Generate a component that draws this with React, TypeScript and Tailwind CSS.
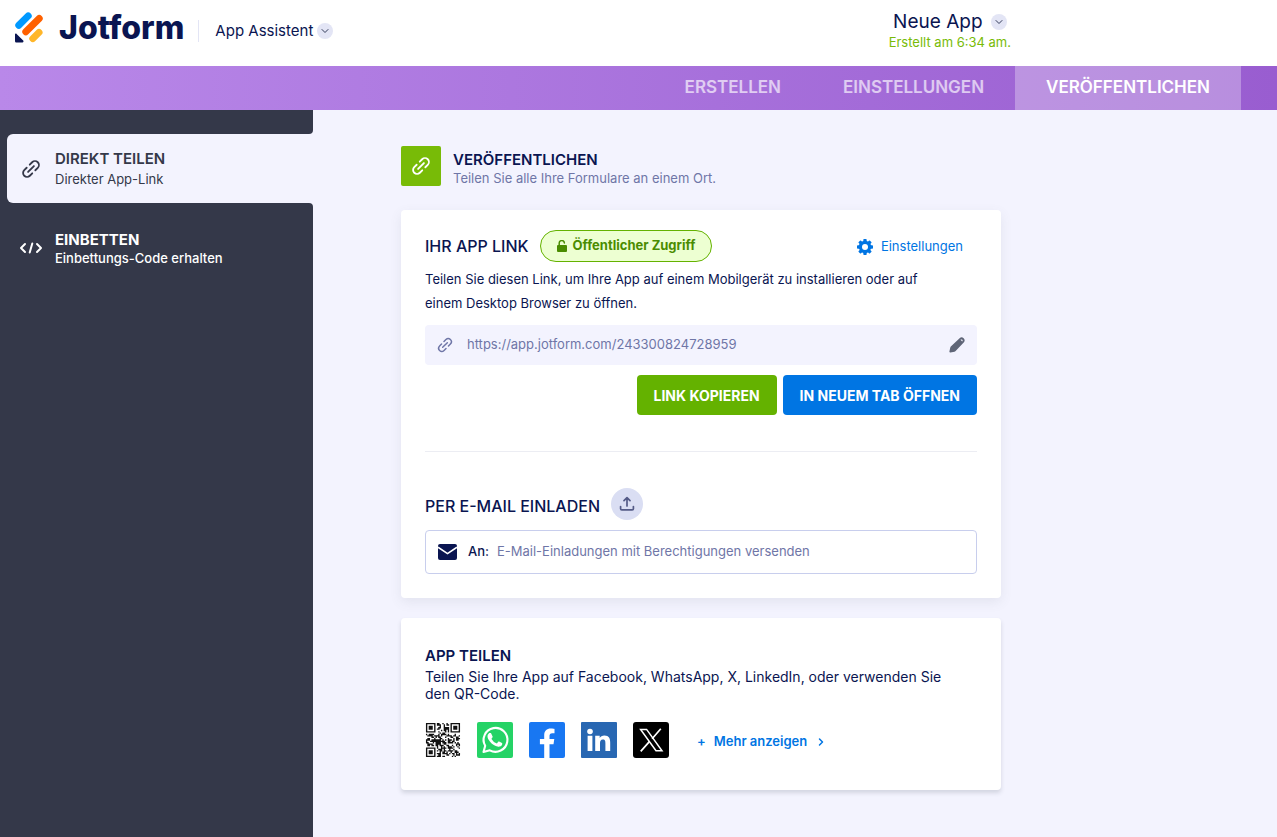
import { useState } from "react";
import { ChevronDown, ChevronRight } from "lucide-react";

interface IconProps {
  className?: string;
}

interface NavTab {
  id: string;
  label: string;
}

const tabs: NavTab[] = [
  { id: "build", label: "ERSTELLEN" },
  { id: "settings", label: "EINSTELLUNGEN" },
  { id: "publish", label: "VERÖFFENTLICHEN" },
];

const LinkIcon = ({ className = "" }: IconProps) => (
  <svg viewBox="0 0 24 24" fill="none" stroke="currentColor" strokeWidth="2.2" strokeLinecap="round" className={className}>
    <path d="M8.5 15.5l7-7" />
    <path d="M10.5 6.8l2.9-2.9a4.7 4.7 0 0 1 6.7 6.7l-2.9 2.9" />
    <path d="M13.5 17.2l-2.9 2.9a4.7 4.7 0 0 1-6.7-6.7l2.9-2.9" />
  </svg>
);

const CodeIcon = ({ className = "" }: IconProps) => (
  <svg viewBox="0 0 24 14" fill="none" stroke="currentColor" strokeWidth="2" strokeLinecap="round" strokeLinejoin="round" className={className}>
    <path d="M6 3L2 7l4 4M18 3l4 4-4 4M13.3 2.5l-2.6 9" />
  </svg>
);

const LockIcon = ({ className = "" }: IconProps) => (
  <svg viewBox="0 0 10 12" className={className}>
    <rect x="0" y="5" width="10" height="7" rx="1" fill="currentColor" />
    <path d="M2.2 5.5V3.4a2.6 2.6 0 0 1 5.2-.4" fill="none" stroke="currentColor" strokeWidth="1.5" strokeLinecap="round" />
  </svg>
);

const GearIcon = ({ className = "" }: IconProps) => (
  <svg viewBox="0 0 16 16" className={className}>
    <g fill="currentColor">
      <rect x="6.3" y="0" width="3.4" height="16" rx="0.8" />
      <rect x="6.3" y="0" width="3.4" height="16" rx="0.8" transform="rotate(45 8 8)" />
      <rect x="6.3" y="0" width="3.4" height="16" rx="0.8" transform="rotate(90 8 8)" />
      <rect x="6.3" y="0" width="3.4" height="16" rx="0.8" transform="rotate(135 8 8)" />
      <circle cx="8" cy="8" r="6.2" />
    </g>
    <circle cx="8" cy="8" r="3" fill="#fff" />
  </svg>
);

const PencilIcon = ({ className = "" }: IconProps) => (
  <svg viewBox="0 0 16 16" className={className}>
    <path
      fill="currentColor"
      fillRule="evenodd"
      d="M.4 14.6l.9-4.1c.1-.4.3-.7.5-.9l8.800-8.300a2.900 2.900 0 0 1 4.100 4.100l-8.300 8.800c-.3.3-.6.4-.9.5l-4.100.9c-.6.1-1.100-.4-1-1zM11.500 2.800l1.700 1.700c.6-.6.6-1.200.1-1.700s-1.200-.5-1.800 0z"
    />
  </svg>
);

const UploadIcon = ({ className = "" }: IconProps) => (
  <svg viewBox="0 0 16 16" fill="none" stroke="currentColor" strokeWidth="1.7" strokeLinecap="round" strokeLinejoin="round" className={className}>
    <path d="M8 10V2M5 4.6L8 1.6l3 3M1.6 10.5v2.2c0 .7.5 1.2 1.2 1.2h10.4c.7 0 1.2-.5 1.2-1.2v-2.2" />
  </svg>
);

const MailIcon = ({ className = "" }: IconProps) => (
  <svg viewBox="0 0 19 16" className={className}>
    <rect width="19" height="16" rx="2" fill="currentColor" />
    <path d="M0 3.2l9.5 6.4L19 3.2" fill="none" stroke="#fff" strokeWidth="1.7" />
  </svg>
);

const LogoMark = ({ className = "" }: IconProps) => (
  <svg viewBox="0 0 28 31" strokeLinecap="round" strokeWidth="7" className={className}>
    <path d="M3.8 13.3l9.4-9.4" stroke="#0099ff" />
    <path d="M10.8 19.8L24.2 6.5" stroke="#ff6100" />
    <path d="M17.8 26.6l6.2-6.2" stroke="#ffb629" />
    <path d="M0 22.6c0-.9 1-1.3 1.6-.7l6.6 6.7c.7.7.2 1.9-.7 1.9H1.6C.7 30.5 0 29.8 0 28.9z" fill="#0a1551" />
  </svg>
);

const QR_SIZE = 25;
const FINDERS = [
  [0, 0],
  [QR_SIZE - 7, 0],
  [0, QR_SIZE - 7],
];

function isDark(x: number, y: number) {
  for (const [fx, fy] of FINDERS) {
    const dx = x - fx;
    const dy = y - fy;
    if (dx >= -1 && dx <= 7 && dy >= -1 && dy <= 7) {
      const ring = Math.max(Math.abs(dx - 3), Math.abs(dy - 3));
      return ring !== 2 && ring !== 4;
    }
  }
  const noise = Math.sin(x * 12.9898 + y * 78.233) * 43758.5453;
  return noise - Math.floor(noise) < 0.54;
}

const QrIcon = ({ className = "" }: IconProps) => {
  let d = "";
  for (let y = 0; y < QR_SIZE; y++) {
    for (let x = 0; x < QR_SIZE; x++) {
      if (isDark(x, y)) d += `M${x} ${y}h1v1h-1z`;
    }
  }
  return (
    <svg viewBox="-0.7 -0.7 26.4 26.4" className={className}>
      <path d={d} fill="#111" />
    </svg>
  );
};

const WhatsAppIcon = ({ className = "" }: IconProps) => (
  <svg viewBox="0 0 36 36" className={className}>
    <rect width="36" height="36" rx="2" fill="#25d366" />
    <path
      d="M6.5 30l1.7-6.2A11.9 11.9 0 1 1 12.8 28.3z"
      fill="none"
      stroke="#fff"
      strokeWidth="2.1"
      strokeLinejoin="round"
    />
    <path
      fill="#fff"
      d="M14.3 11.7c-.3-.6-.5-.6-.8-.6h-.7c-.3 0-.7.1-1 .5-.4.4-1.3 1.3-1.3 3s1.3 3.5 1.5 3.7c.2.3 2.5 4 6.2 5.4 3.1 1.2 3.7 1 4.4.9.7-.1 2.1-.9 2.4-1.7.3-.8.3-1.6.2-1.7-.1-.2-.3-.3-.7-.4l-2.4-1.2c-.4-.1-.6-.2-.9.2l-1.1 1.4c-.2.3-.4.3-.8.1a9.5 9.5 0 0 1-4.8-4.2c-.2-.4 0-.6.2-.7l.5-.6.4-.6c.1-.3 0-.5 0-.6z"
    />
  </svg>
);

const FacebookIcon = ({ className = "" }: IconProps) => (
  <svg viewBox="0 0 36 36" className={className}>
    <rect width="36" height="36" rx="2" fill="#1877f2" />
    <path
      fill="#fff"
      d="M15.2 36V22.3h-4.3v-5.2h4.3v-3.8c0-4.4 2.6-6.7 6.5-6.7 1.9 0 3.8.3 3.8.3v4.3h-2.2c-2.1 0-2.8 1.3-2.8 2.7v3.2h4.8l-.8 5.2h-4V36z"
    />
  </svg>
);

const LinkedInIcon = ({ className = "" }: IconProps) => (
  <svg viewBox="0 0 36 36" className={className}>
    <rect width="36" height="36" rx="1" fill="#2867b2" />
    <circle cx="9" cy="9.5" r="2.8" fill="#fff" />
    <path
      fill="#fff"
      d="M6.6 13.8h4.8V29H6.6zM14.2 13.8h4.5v2.1c.8-1.4 2.4-2.5 4.7-2.5 4.7 0 5.8 3 5.8 7.1V29h-4.8v-7.6c0-1.8-.1-3.9-2.5-3.9s-2.9 1.8-2.9 3.8V29h-4.8z"
    />
  </svg>
);

const XIcon = ({ className = "" }: IconProps) => (
  <svg viewBox="0 0 36 36" className={className}>
    <rect width="36" height="36" rx="3" fill="#000" />
    <path d="M7.6 7.4h6L29 28.8h-6z" fill="none" stroke="#fff" strokeWidth="1.5" />
    <path d="M27.8 6.8l-8.7 9.9M16.6 19.4l-8.9 10" stroke="#fff" strokeWidth="1.7" />
  </svg>
);

const shareTargets = [
  { name: "QR-Code", Icon: QrIcon },
  { name: "WhatsApp", Icon: WhatsAppIcon },
  { name: "Facebook", Icon: FacebookIcon },
  { name: "LinkedIn", Icon: LinkedInIcon },
  { name: "X", Icon: XIcon },
];

const Caret = () => (
  <span className="flex size-4 items-center justify-center rounded-full bg-[#e3e5f5]">
    <ChevronDown size={12} strokeWidth={2} className="text-[#343c5a]" />
  </span>
);

function Header() {
  return (
    <header className="flex h-[66px] items-start bg-white pl-[15px]">
      <a href="#" aria-label="Jotform" className="flex pt-3">
        <LogoMark className="h-[31px] w-7" />
        <span className="ml-4 text-[32px] leading-8 font-extrabold">Jotform</span>
      </a>
      <button type="button" className="mt-5 ml-[14px] flex h-[22px] items-center gap-1 border-l border-[#e3e5f5] pl-4 text-[15px]">
        App Assistent
        <Caret />
      </button>
      <div className="mr-[266px] ml-auto flex flex-col items-center pt-2">
        <button type="button" className="flex items-center gap-2 text-[19px] leading-7">
          Neue App
          <Caret />
        </button>
        <p className="text-[13px] leading-[13px] text-[#78bb07]">Erstellt am 6:34 am.</p>
      </div>
    </header>
  );
}

function Sidebar() {
  return (
    <aside className="flex w-[313px] shrink-0 flex-col">
      <div className="h-6 rounded-br-sm bg-[#343849]" />
      <div className="bg-[#343849] pl-[7px]">
        <a href="#share" className="flex h-[69px] items-center rounded-l-md bg-[#f3f3fe] pl-[14px] text-[#343849]">
          <LinkIcon className="size-5" />
          <span className="ml-[14px]">
            <span className="block text-[15px] leading-5 font-semibold">DIREKT TEILEN</span>
            <span className="block text-[13px] leading-5">Direkter App-Link</span>
          </span>
        </a>
      </div>
      <div className="flex-1 rounded-tr-sm bg-[#343849] pt-[10px] pl-[7px]">
        <a href="#embed" className="flex h-[69px] items-center pl-3 text-white">
          <CodeIcon className="h-[14px] w-6" />
          <span className="ml-3">
            <span className="block text-[15px] leading-5 font-bold">EINBETTEN</span>
            <span className="block text-[13px] leading-4 font-medium">Einbettungs-Code erhalten</span>
          </span>
        </a>
      </div>
    </aside>
  );
}

function LinkCard() {
  const [email, setEmail] = useState("");

  return (
    <section className="rounded bg-white px-6 pt-5 pb-6 shadow-[0_4px_12px_rgba(84,95,111,0.10)]">
      <div className="flex items-center">
        <h2 className="text-[16px] font-medium">IHR APP LINK</h2>
        <button
          type="button"
          className="ml-[11px] flex h-8 items-center gap-[6px] rounded-full border border-[#64b200] bg-[#edffd2] px-4 text-[13px] font-bold text-[#4a8c00]"
        >
          <LockIcon className="h-3 w-[10px]" />
          Öffentlicher Zugriff
        </button>
        <button type="button" className="mr-[14px] ml-auto flex items-center gap-2 pt-[2px] text-[13px] text-[#0075e3]">
          <GearIcon className="size-4" />
          Einstellungen
        </button>
      </div>
      <p className="mt-[5px] pr-6 text-[13px] leading-6">
        Teilen Sie diesen Link, um Ihre App auf einem Mobilgerät zu installieren oder auf einem Desktop Browser zu
        öffnen.
      </p>

      <div className="mt-[10px] flex h-10 items-center rounded bg-[#f3f3fe] px-3 text-[#6f76a7]">
        <LinkIcon className="size-4" />
        <input
          type="text"
          readOnly
          aria-label="App-Link"
          value="https://app.jotform.com/243300824728959"
          className="ml-[14px] min-w-0 flex-1 bg-transparent text-[13px] outline-none"
        />
        <button type="button" aria-label="Link bearbeiten">
          <PencilIcon className="size-4 text-[#5f6577]" />
        </button>
      </div>
      <div className="mt-[10px] flex justify-end gap-[6px] text-[14px] font-bold text-white">
        <button type="button" className="h-10 rounded bg-[#64b200] px-[17px]">
          LINK KOPIEREN
        </button>
        <button type="button" className="h-10 rounded bg-[#0075e3] px-[17px]">
          IN NEUEM TAB ÖFFNEN
        </button>
      </div>

      <hr className="mt-9 border-[#ecedf3]" />

      <div className="mt-9 flex items-center">
        <h2 className="pt-1 text-[16px] font-medium">PER E-MAIL EINLADEN</h2>
        <button
          type="button"
          aria-label="Hochladen"
          className="ml-[11px] flex size-8 items-center justify-center rounded-full bg-[#dadef3] text-[#545b87]"
        >
          <UploadIcon className="size-4" />
        </button>
      </div>
      <div className="mt-[10px] flex h-11 items-center rounded border border-[#c8ceed] px-3 text-[13px]">
        <MailIcon className="h-4 w-[19px]" />
        <label htmlFor="invite" className="ml-[11px] font-medium">
          An:
        </label>
        <input
          id="invite"
          type="email"
          value={email}
          onChange={(e) => setEmail(e.target.value)}
          placeholder="E-Mail-Einladungen mit Berechtigungen versenden"
          className="ml-2 min-w-0 flex-1 outline-none placeholder:text-[#6f76a7]"
        />
      </div>
    </section>
  );
}

function ShareCard() {
  return (
    <section className="mt-5 rounded bg-white px-6 pt-7 pb-8 shadow-[0_3px_4px_rgba(84,95,111,0.2)]">
      <h2 className="text-[15px] leading-5 font-semibold">APP TEILEN</h2>
      <p className="mt-[2px] pr-6 text-[14px] leading-[17px]">
        Teilen Sie Ihre App auf Facebook, WhatsApp, X, LinkedIn, oder verwenden Sie den QR-Code.
      </p>
      <div className="mt-5 flex items-center gap-4">
        {shareTargets.map(({ name, Icon }) => (
          <button key={name} type="button" aria-label={name}>
            <Icon className="size-9" />
          </button>
        ))}
        <button type="button" className="ml-3 flex items-center gap-2 pt-1 text-[13px] font-semibold text-[#0075e3]">
          <span>+</span>
          Mehr anzeigen
          <ChevronRight size={12} strokeWidth={3} />
        </button>
      </div>
    </section>
  );
}

export default function App() {
  const [activeTab, setActiveTab] = useState("publish");

  return (
    <div className="flex min-h-screen flex-col bg-[#f3f3fe] font-['Inter',sans-serif] text-[#0a1551]">
      <Header />
      <nav className="flex h-11 justify-end bg-linear-to-r from-[#b988e9] to-[#995dd0] pr-9">
        {tabs.map((tab) => (
          <button
            key={tab.id}
            type="button"
            onClick={() => setActiveTab(tab.id)}
            className={`px-[31px] text-[17px] font-semibold ${
              activeTab === tab.id ? "bg-white/30 text-white" : "text-white/65"
            }`}
          >
            {tab.label}
          </button>
        ))}
      </nav>
      <div className="flex flex-1">
        <Sidebar />
        <main className="min-w-0 flex-1 pt-9 pr-6 pb-11 pl-[88px]">
          <div className="max-w-[600px]">
            <div className="mb-6 flex items-center gap-3">
              <span className="flex size-10 items-center justify-center rounded-xs bg-[#78bb07] text-white">
                <LinkIcon className="size-5" />
              </span>
              <div className="pt-1">
                <h1 className="text-[15px] leading-5 font-semibold">VERÖFFENTLICHEN</h1>
                <p className="text-[13px] leading-4 text-[#6f76a7]">Teilen Sie alle Ihre Formulare an einem Ort.</p>
              </div>
            </div>
            <LinkCard />
            <ShareCard />
          </div>
        </main>
      </div>
    </div>
  );
}
